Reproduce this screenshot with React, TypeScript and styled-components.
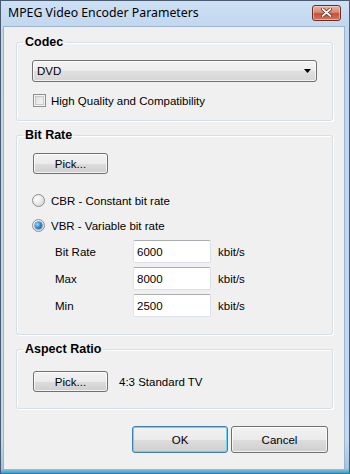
import React from "react";
import styled, { createGlobalStyle } from "styled-components";

const GlobalStyle = createGlobalStyle`
  html, body { margin: 0; padding: 0; background: #ffffff; }
  body { font-family: "Liberation Sans", Arial, sans-serif; }
  #root { width: 350px; height: 474px; }
`;

const Window = styled.div`
  width: 350px;
  height: 474px;
  box-sizing: border-box;
  display: flex;
  flex-direction: column;
  border: 1px solid #4a5a70;
  border-bottom-color: #2e7fa8;
  background: linear-gradient(to bottom, #cde0f4 0px, #bfd6ee 30px, #c4d8ee 440px, #9cc6df 468px, #3f9cc8 472px);
  padding: 0 4px 3px 2px;
`;

const TitleBar = styled.div`
  height: 25px;
  flex: none;
  display: flex;
  align-items: center;
  justify-content: space-between;
  padding: 0 4px 0 5px;
`;

const Title = styled.div`
  font-family: "Noto Sans", "Liberation Sans", sans-serif;
  font-size: 12.3px;
  color: #000;
  margin-top: -3px;
`;

const CloseButton = styled.div`
  width: 29px;
  height: 16px;
  box-sizing: border-box;
  margin-top: -2px;
  border: 1px solid #6e2e24;
  border-radius: 3px;
  background: linear-gradient(to bottom, #e8b3a7 0%, #d98774 45%, #c7503a 55%, #d4765c 100%);
  box-shadow: inset 0 0 0 1px rgba(255, 220, 210, 0.55);
  display: flex;
  align-items: center;
  justify-content: center;
`;

const Client = styled.div`
  flex: 1;
  display: flex;
  flex-direction: column;
  gap: 6px;
  background: #f0f0f0;
  border: 1px solid #9eb4cc;
  padding: 7px 11px 0 12px;
  min-height: 0;
`;

const Group = styled.fieldset<{ $pt: number; $pb: number }>`
  margin: 0;
  padding: ${(p) => p.$pt}px 15px ${(p) => p.$pb}px 15px;
  border: 1px solid #d5dfe5;
  border-radius: 3px;
  box-shadow: inset 1px 1px 0 #ffffff, 1px 1px 0 #ffffff;
  min-width: 0;
  display: flex;
  flex-direction: column;
`;

const Legend = styled.legend`
  padding: 0 2px;
  margin-left: -9px;
  font-weight: bold;
  font-size: 12.5px;
  line-height: 16px;
  color: #000;
`;

const Combo = styled.div`
  height: 22px;
  box-sizing: border-box;
  border: 1px solid #707070;
  border-radius: 3px;
  background: linear-gradient(to bottom, #f4f4f4 0%, #ececec 50%, #e0e0e0 51%, #d6d6d6 100%);
  box-shadow: inset 0 0 0 1px rgba(255, 255, 255, 0.7);
  display: flex;
  align-items: center;
  justify-content: space-between;
  padding: 0 5px 0 4px;
  font-size: 11.5px;
  color: #000;
`;

const Text = styled.span`
  font-size: 11.5px;
  color: #000;
  white-space: nowrap;
`;

const Unit = styled(Text)`
  margin-left: 7px;
`;

const OptionRow = styled.div<{ $mt: number; $gap: number; $ml?: number }>`
  display: flex;
  align-items: center;
  height: 13px;
  margin-top: ${(p) => p.$mt}px;
  margin-left: ${(p) => p.$ml ?? 0}px;
  gap: ${(p) => p.$gap}px;
`;

const CheckBox = styled.span`
  width: 13px;
  height: 13px;
  box-sizing: border-box;
  border: 1px solid #8f8f8f;
  background: linear-gradient(135deg, #d6d6d6 0%, #eeeeee 60%, #fafafa 100%);
  box-shadow: inset 0 0 0 1px #f4f4f4, inset 0 0 0 2px #c8c8c8;
  flex: none;
`;

const Radio = styled.span<{ $checked?: boolean }>`
  width: 13px;
  height: 13px;
  box-sizing: border-box;
  border-radius: 50%;
  border: 1px solid #8e8f8f;
  background: radial-gradient(circle at 35% 35%, #ffffff 0%, #e8e8e8 50%, #cfcfcf 100%);
  flex: none;
  display: flex;
  align-items: center;
  justify-content: center;
  &::after {
    content: "";
    display: ${(p) => (p.$checked ? "block" : "none")};
    width: 7px;
    height: 7px;
    border-radius: 50%;
    background: radial-gradient(circle at 35% 35%, #9ee0ff 0%, #2a8fd8 45%, #0d4f93 100%);
    box-shadow: 0 0 0 0.5px #1d5f98;
  }
`;

const Button = styled.button<{ $w: number; $h: number; $default?: boolean }>`
  width: ${(p) => p.$w}px;
  height: ${(p) => p.$h}px;
  box-sizing: border-box;
  margin: 0;
  padding: 0;
  border: 1px solid ${(p) => (p.$default ? "#3c7fb1" : "#707070")};
  border-radius: 3px;
  background: linear-gradient(to bottom, #f2f2f2 0%, #ebebeb 50%, #dddddd 51%, #cfcfcf 100%);
  box-shadow: inset 0 0 0 1px ${(p) => (p.$default ? "#6ad3f6" : "rgba(255,255,255,0.75)")};
  font-family: "Liberation Sans", Arial, sans-serif;
  font-size: 11.5px;
  color: #000;
  flex: none;
`;

const PickRow = styled.div<{ $gap: number }>`
  display: flex;
  align-items: center;
  gap: ${(p) => p.$gap}px;
  margin-left: 1px;
`;

const RateGrid = styled.div`
  display: grid;
  grid-template-columns: 78px 78px auto;
  grid-auto-rows: 23px;
  row-gap: 4px;
  align-items: center;
  margin-top: 8px;
  padding-left: 23px;
`;

const Field = styled.div`
  height: 23px;
  box-sizing: border-box;
  background: #ffffff;
  border: 1px solid #dbdfe6;
  border-top-color: #abadb3;
  border-left-color: #e2e3ea;
  border-radius: 2px;
  display: flex;
  align-items: center;
  padding-left: 3px;
  font-size: 11.5px;
  color: #000;
`;

const ButtonRow = styled.div`
  display: flex;
  justify-content: flex-end;
  gap: 3px;
  margin-top: 11px;
  margin-right: 5px;
`;

const rates = [
  { label: "Bit Rate", value: "6000" },
  { label: "Max", value: "8000" },
  { label: "Min", value: "2500" },
];

export default function App() {
  return (
    <>
      <GlobalStyle />
      <Window>
        <TitleBar>
          <Title>MPEG Video Encoder Parameters</Title>
          <CloseButton>
            <svg width="11" height="9" viewBox="0 0 11 9">
              <path d="M1.5 1 L9.5 8 M9.5 1 L1.5 8" stroke="#5a1f16" strokeWidth="3.2" strokeLinecap="round" />
              <path d="M1.5 1 L9.5 8 M9.5 1 L1.5 8" stroke="#ffffff" strokeWidth="1.8" strokeLinecap="round" />
            </svg>
          </CloseButton>
        </TitleBar>
        <Client>
          <Group $pt={10} $pb={13}>
            <Legend>Codec</Legend>
            <Combo>
              <span>DVD</span>
              <svg width="7" height="4" viewBox="0 0 7 4">
                <path d="M0 0 H7 L3.5 4 Z" fill="#000" />
              </svg>
            </Combo>
            <OptionRow $mt={12} $gap={5} $ml={1}>
              <CheckBox />
              <Text>High Quality and Compatibility</Text>
            </OptionRow>
          </Group>
          <Group $pt={10} $pb={17}>
            <Legend>Bit Rate</Legend>
            <PickRow $gap={0}>
              <Button $w={75} $h={21}>Pick...</Button>
            </PickRow>
            <OptionRow $mt={20} $gap={6}>
              <Radio />
              <Text>CBR - Constant bit rate</Text>
            </OptionRow>
            <OptionRow $mt={12} $gap={6}>
              <Radio $checked />
              <Text>VBR - Variable bit rate</Text>
            </OptionRow>
            <RateGrid>
              {rates.map((r) => (
                <React.Fragment key={r.label}>
                  <Text>{r.label}</Text>
                  <Field>{r.value}</Field>
                  <Unit>kbit/s</Unit>
                </React.Fragment>
              ))}
            </RateGrid>
          </Group>
          <Group $pt={14} $pb={16}>
            <Legend>Aspect Ratio</Legend>
            <PickRow $gap={11}>
              <Button $w={75} $h={21}>Pick...</Button>
              <Text>4:3 Standard TV</Text>
            </PickRow>
          </Group>
          <ButtonRow>
            <Button $w={96} $h={27} $default>OK</Button>
            <Button $w={97} $h={27}>Cancel</Button>
          </ButtonRow>
        </Client>
      </Window>
    </>
  );
}
